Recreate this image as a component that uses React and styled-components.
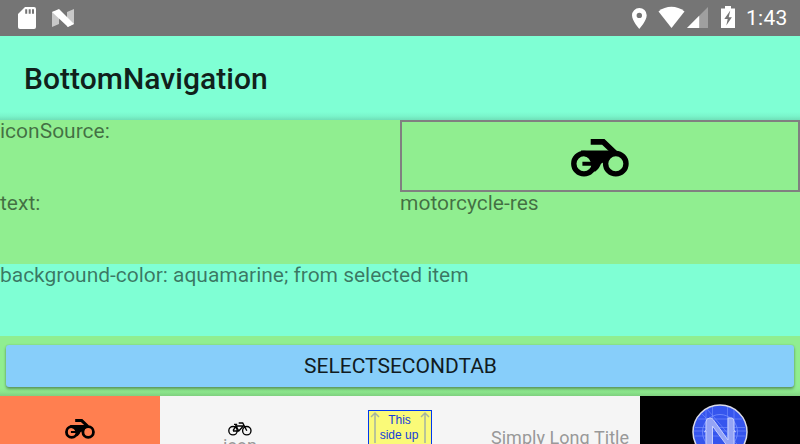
import React from 'react';
import styled, { createGlobalStyle } from 'styled-components';

const GlobalStyle = createGlobalStyle`
  * { box-sizing: border-box; }
  body { margin: 0; overflow: hidden; font-family: Roboto, sans-serif; }
  svg { display: block; flex: none; }
`;

const Screen = styled.div`
  display: flex;
  flex-direction: column;
  width: 800px;
  height: 444px;
  overflow: hidden;
  background: #90ee90;
`;

const StatusBar = styled.header`
  display: flex;
  justify-content: space-between;
  flex: none;
  height: 36px;
  background: #757575;
`;

const StatusGroup = styled.div`
  display: flex;
  align-items: center;
  padding: 0 12px 0 18px;
`;

const Clock = styled.span`
  width: 42px;
  margin-left: 10px;
  font-size: 21px;
  line-height: 38px;
  letter-spacing: 0.3px;
  white-space: nowrap;
  color: #fff;
`;

const ActionBar = styled.h1`
  flex: none;
  height: 84px;
  margin: 0;
  padding: 0 24px;
  font-size: 30px;
  font-weight: 500;
  line-height: 85px;
  letter-spacing: 0.04px;
  color: #10211b;
  background: linear-gradient(#7fffd4 0 76px, #7af5cb 80px, #70dfb9 84px);
`;

const Properties = styled.section`
  display: grid;
  grid-template-columns: 400px 400px;
  grid-template-rows: 72px 72px 72px;
  flex: none;
`;

const Label = styled.div`
  font-size: 21px;
  line-height: 23px;
  color: rgba(0, 0, 0, 0.54);
  white-space: nowrap;
`;

const WideLabel = styled(Label)`
  grid-column: 1 / -1;
  letter-spacing: -0.03px;
  background: #7fffd4;
`;

const IconFrame = styled.div`
  display: flex;
  justify-content: center;
  padding-top: 17px;
  border: 2px solid #808080;
`;

const ButtonArea = styled.div`
  flex: none;
  height: 60px;
  padding: 9px 6px;
  background: linear-gradient(#90ee90 0 52px, #8be58b 56px, #7fd07f 60px);
`;

const Button = styled.button`
  display: block;
  width: 100%;
  height: 42px;
  padding: 0 0 0 1px;
  border: 0;
  border-radius: 3px;
  font-family: inherit;
  font-size: 21px;
  line-height: 42px;
  color: #111b21;
  background: #87cefa;
  box-shadow: 0 2px 3px rgba(0, 0, 0, 0.35), 0 0 2px rgba(0, 0, 0, 0.15);
`;

const TabBar = styled.nav`
  display: grid;
  grid-template-columns: repeat(5, 160px);
  flex: none;
  height: 84px;
`;

const Tab = styled.div`
  display: flex;
  flex-direction: column;
  align-items: center;
  height: 84px;
  padding-top: ${({ $top }) => $top}px;
  background: ${({ $color }) => $color || '#f5f5f5'};
`;

const TabText = styled.span`
  margin-top: -1px;
  font-size: 18px;
  line-height: 21px;
  letter-spacing: 0.05px;
  white-space: nowrap;
  color: #999;
`;

const SignText = styled.text`
  font: 12px "Liberation Sans", sans-serif;
  text-anchor: middle;
  fill: #143cdb;
`;

function Motorcycle({ width, height }) {
  return (
    <svg width={width} height={height} viewBox="0 0 58 38" preserveAspectRatio="none">
      <g fill="none" stroke="#000" strokeWidth="5.4">
        <circle cx="13" cy="24.7" r="10.2" />
        <circle cx="44.8" cy="24.7" r="10.2" />
        <path d="M19.7 2.9h12.6L44 14" strokeWidth="5.8" />
      </g>
      <path d="M10 11.5h34l3 4.4c-6 .5-10 3.5-10.5 8.1-2.5-.5-4.5-.8-6.5.8-1.2 3.2-3 6-6 8L20 30l2.7-3.2H11.4v-4h8.2C18 18.8 15.8 17.2 10 16.5Z" />
    </svg>
  );
}

function Bicycle() {
  return (
    <svg width="24" height="14" viewBox="0 0 24 14" fill="none" stroke="#000" strokeWidth="1.35">
      <circle cx="5" cy="8.7" r="4.2" />
      <circle cx="18.8" cy="8.7" r="4.2" />
      <path d="M5 8.7 8.1 4h7.3l-4.7 5H5M7.5 2.6l3.2 6.4M6 2.3h3.2M10.7 1h4l4.1 7.7" />
    </svg>
  );
}

function SdCard() {
  return (
    <svg width="18" height="22" viewBox="0 0 18 22">
      <path d="M7 0h9a2 2 0 0 1 2 2v18a2 2 0 0 1-2 2H2a2 2 0 0 1-2-2V7Z" fill="#fff" />
      <path d="M8.2 2.3v4.4M11.7 2.3v4.4M15 2.3v4.4" stroke="#757575" strokeWidth="2" />
    </svg>
  );
}

const NougatSvg = styled.svg`
  margin-left: 16px;
`;

function Nougat() {
  return (
    <NougatSvg width="22" height="18" viewBox="0 0 22 18">
      <path d="M0 3 7 1v14L0 18ZM22 0v15l-7 3V3Z" fill="#c8c8c8" />
      <path d="M0 3 7 0l15 15-6 3Z" fill="#fff" />
    </NougatSvg>
  );
}

function DeviceStatus() {
  return (
    <svg width="104" height="36" viewBox="0 0 104 36" fill="#fff">
      <path fillRule="evenodd" d="M7.3 8A7.3 7.3 0 0 0 0 15.3C0 21 7.3 29 7.3 29s7.4-8 7.4-13.7A7.3 7.3 0 0 0 7.3 8Zm0 4.7a2.7 2.7 0 1 1 0 5.4 2.7 2.7 0 0 1 0-5.4Z" />
      <path d="M26.5 11.5C34 5.3 44.8 5.3 52.5 11.5L39.5 28Z" />
      <path d="M76 7v21H55Z" fill="#9f9f9f" />
      <path d="M67.2 15.8V28H55Z" />
      <path d="M89 8.5h4V6h6v2.5h4V28H89Z" />
      <path d="m98.3 10.5-6 8.5h3.4l-1.4 6.5 5.6-8.2h-3.2Z" fill="#757575" />
    </svg>
  );
}

function ThisSideUp() {
  return (
    <svg width="64" height="64" viewBox="0 0 64 64">
      <rect x=".5" y=".5" width="63" height="63" fill="#fafa78" stroke="#0038ee" />
      <path d="M7 33V4M3 7l4-4 4 4M57 33V4m-4 3 4-4 4 4" fill="none" stroke="#a4b3a1" strokeWidth="1.5" />
      <SignText x="31.5" y="14">This</SignText>
      <SignText x="31" y="29">side up</SignText>
    </svg>
  );
}

function BlueprintLogo() {
  return (
    <svg width="56" height="56" viewBox="0 0 56 56">
      <circle cx="28" cy="28" r="27" fill="#3555ee" stroke="#dadbe9" strokeWidth="1.5" />
      <g fill="none" stroke="#7892ff" strokeWidth=".8">
        <path d="M14 6v44M20.5 3v50M35.5 3v50M42 6v44M6 15h44M3 23.5h50M2 27h52M3 32h50M9 9l38 38M15 5l35 41" opacity=".75" />
        <circle cx="28" cy="28" r="17.5" />
      </g>
      <path d="M14 43V27l-1.5 1 1.5-2V18q0-4 4-4 2.2 0 3.5 2L36 36V14h4q2 0 2 4v8l1.5 2-1.5-1v16h-6L20.5 22v21Z" fill="#94a4f5" stroke="#c5ceff" strokeWidth="1" />
    </svg>
  );
}

export default function App() {
  return (
    <>
      <GlobalStyle />
      <Screen>
        <StatusBar>
          <StatusGroup><SdCard /><Nougat /></StatusGroup>
          <StatusGroup><DeviceStatus /><Clock>1:43</Clock></StatusGroup>
        </StatusBar>
        <ActionBar>BottomNavigation</ActionBar>
        <Properties>
          <Label>iconSource:</Label>
          <IconFrame><Motorcycle width={58} height={38} /></IconFrame>
          <Label>text:</Label>
          <Label>motorcycle-res</Label>
          <WideLabel>background-color: aquamarine; from selected item</WideLabel>
        </Properties>
        <ButtonArea><Button>SELECTSECONDTAB</Button></ButtonArea>
        <TabBar>
          <Tab $color="#ff7f50" $top={23}><Motorcycle width={30} height={20} /></Tab>
          <Tab $top={26}><Bicycle /><TabText>icon</TabText></Tab>
          <Tab $top={14}><ThisSideUp /></Tab>
          <Tab $top={32}><TabText>Simply Long Title</TabText></Tab>
          <Tab $color="#000" $top={8}><BlueprintLogo /></Tab>
        </TabBar>
      </Screen>
    </>
  );
}
